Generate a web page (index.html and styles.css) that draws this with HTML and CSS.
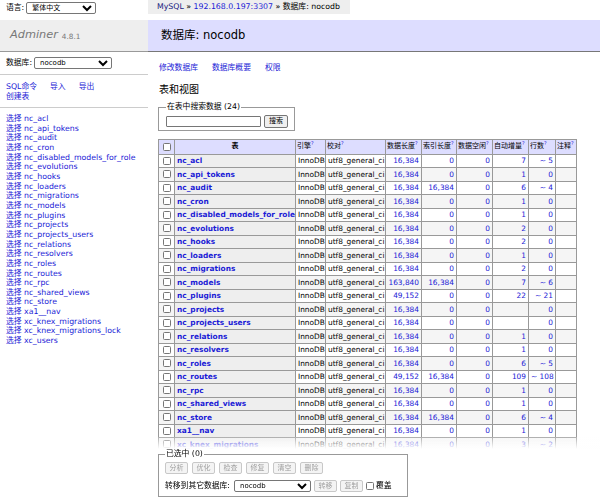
FILE: index.html
```html
<!DOCTYPE html>
<html lang="zh-CN">
<head>
<meta charset="utf-8">
<title>数据库: nocodb - Adminer</title>
<link rel="stylesheet" href="styles.css">
</head>
<body>
<div class="page">
  <aside class="menu">
    <div class="lang">语言: <select class="sel sel-lang"><option>繁体中文</option></select></div>
    <h1 class="logo"><a class="logo-name">Adminer</a><span class="version">4.8.1</span></h1>
    <p class="dbs">数据库: <select class="sel sel-db"><option>nocodb</option></select></p>
    <p class="menu-links"><a>SQL命令</a><a>导入</a><a>导出</a><br><a>创建表</a></p>
    <ul class="tables">
      <li><a>选择</a> <a>nc_acl</a></li>
      <li><a>选择</a> <a>nc_api_tokens</a></li>
      <li><a>选择</a> <a>nc_audit</a></li>
      <li><a>选择</a> <a>nc_cron</a></li>
      <li><a>选择</a> <a>nc_disabled_models_for_role</a></li>
      <li><a>选择</a> <a>nc_evolutions</a></li>
      <li><a>选择</a> <a>nc_hooks</a></li>
      <li><a>选择</a> <a>nc_loaders</a></li>
      <li><a>选择</a> <a>nc_migrations</a></li>
      <li><a>选择</a> <a>nc_models</a></li>
      <li><a>选择</a> <a>nc_plugins</a></li>
      <li><a>选择</a> <a>nc_projects</a></li>
      <li><a>选择</a> <a>nc_projects_users</a></li>
      <li><a>选择</a> <a>nc_relations</a></li>
      <li><a>选择</a> <a>nc_resolvers</a></li>
      <li><a>选择</a> <a>nc_roles</a></li>
      <li><a>选择</a> <a>nc_routes</a></li>
      <li><a>选择</a> <a>nc_rpc</a></li>
      <li><a>选择</a> <a>nc_shared_views</a></li>
      <li><a>选择</a> <a>nc_store</a></li>
      <li><a>选择</a> <a>xa1__nav</a></li>
      <li><a>选择</a> <a>xc_knex_migrations</a></li>
      <li><a>选择</a> <a>xc_knex_migrations_lock</a></li>
      <li><a>选择</a> <a>xc_users</a></li>
    </ul>
  </aside>
  <main class="content">
    <div class="breadcrumb"><a class="visited">MySQL</a> » <a>192.168.0.197:3307</a> » 数据库: nocodb</div>
    <h2 class="title">数据库: nocodb</h2>
    <div class="inner">
      <p class="links"><a>修改数据库</a><a>数据库概要</a><a>权限</a></p>
      <h3 class="subtitle">表和视图</h3>
      <fieldset class="search">
        <legend>在表中搜索数据 (24)</legend>
        <div class="search-row"><input type="search" class="search-input"><button class="btn">搜索</button></div>
      </fieldset>
      <table class="tbl">
        <colgroup>
          <col class="c-cb"><col class="c-name"><col class="c-eng"><col class="c-col"><col class="c-n1"><col class="c-n2"><col class="c-n3"><col class="c-n4"><col class="c-n5"><col class="c-cm">
        </colgroup>
        <thead>
          <tr>
            <td class="cbc"><input type="checkbox" class="cb"></td>
            <th>表</th>
            <td>引擎<sup><a>?</a></sup></td>
            <td>校对<sup><a>?</a></sup></td>
            <td>数据长度<sup><a>?</a></sup></td>
            <td>索引长度<sup><a>?</a></sup></td>
            <td>数据空闲<sup><a>?</a></sup></td>
            <td>自动增量<sup><a>?</a></sup></td>
            <td>行数<sup><a>?</a></sup></td>
            <td>注释<sup><a>?</a></sup></td>
          </tr>
        </thead>
        <tbody>
          <tr><td class="cbc"><input type="checkbox" class="cb"></td><th><a>nc_acl</a></th><td>InnoDB</td><td>utf8_general_ci</td><td class="n"><a>16,384</a></td><td class="n"><a>0</a></td><td class="n"><a>0</a></td><td class="n"><a>7</a></td><td class="n"><a>~ 5</a></td><td></td></tr>
          <tr><td class="cbc"><input type="checkbox" class="cb"></td><th><a>nc_api_tokens</a></th><td>InnoDB</td><td>utf8_general_ci</td><td class="n"><a>16,384</a></td><td class="n"><a>0</a></td><td class="n"><a>0</a></td><td class="n"><a>1</a></td><td class="n"><a>0</a></td><td></td></tr>
          <tr><td class="cbc"><input type="checkbox" class="cb"></td><th><a>nc_audit</a></th><td>InnoDB</td><td>utf8_general_ci</td><td class="n"><a>16,384</a></td><td class="n"><a>16,384</a></td><td class="n"><a>0</a></td><td class="n"><a>6</a></td><td class="n"><a>~ 4</a></td><td></td></tr>
          <tr><td class="cbc"><input type="checkbox" class="cb"></td><th><a>nc_cron</a></th><td>InnoDB</td><td>utf8_general_ci</td><td class="n"><a>16,384</a></td><td class="n"><a>0</a></td><td class="n"><a>0</a></td><td class="n"><a>1</a></td><td class="n"><a>0</a></td><td></td></tr>
          <tr><td class="cbc"><input type="checkbox" class="cb"></td><th><a>nc_disabled_models_for_role</a></th><td>InnoDB</td><td>utf8_general_ci</td><td class="n"><a>16,384</a></td><td class="n"><a>0</a></td><td class="n"><a>0</a></td><td class="n"><a>1</a></td><td class="n"><a>0</a></td><td></td></tr>
          <tr><td class="cbc"><input type="checkbox" class="cb"></td><th><a>nc_evolutions</a></th><td>InnoDB</td><td>utf8_general_ci</td><td class="n"><a>16,384</a></td><td class="n"><a>0</a></td><td class="n"><a>0</a></td><td class="n"><a>2</a></td><td class="n"><a>0</a></td><td></td></tr>
          <tr><td class="cbc"><input type="checkbox" class="cb"></td><th><a>nc_hooks</a></th><td>InnoDB</td><td>utf8_general_ci</td><td class="n"><a>16,384</a></td><td class="n"><a>0</a></td><td class="n"><a>0</a></td><td class="n"><a>2</a></td><td class="n"><a>0</a></td><td></td></tr>
          <tr><td class="cbc"><input type="checkbox" class="cb"></td><th><a>nc_loaders</a></th><td>InnoDB</td><td>utf8_general_ci</td><td class="n"><a>16,384</a></td><td class="n"><a>0</a></td><td class="n"><a>0</a></td><td class="n"><a>1</a></td><td class="n"><a>0</a></td><td></td></tr>
          <tr><td class="cbc"><input type="checkbox" class="cb"></td><th><a>nc_migrations</a></th><td>InnoDB</td><td>utf8_general_ci</td><td class="n"><a>16,384</a></td><td class="n"><a>0</a></td><td class="n"><a>0</a></td><td class="n"><a>2</a></td><td class="n"><a>0</a></td><td></td></tr>
          <tr><td class="cbc"><input type="checkbox" class="cb"></td><th><a>nc_models</a></th><td>InnoDB</td><td>utf8_general_ci</td><td class="n"><a>163,840</a></td><td class="n"><a>16,384</a></td><td class="n"><a>0</a></td><td class="n"><a>7</a></td><td class="n"><a>~ 6</a></td><td></td></tr>
          <tr><td class="cbc"><input type="checkbox" class="cb"></td><th><a>nc_plugins</a></th><td>InnoDB</td><td>utf8_general_ci</td><td class="n"><a>49,152</a></td><td class="n"><a>0</a></td><td class="n"><a>0</a></td><td class="n"><a>22</a></td><td class="n"><a>~ 21</a></td><td></td></tr>
          <tr><td class="cbc"><input type="checkbox" class="cb"></td><th><a>nc_projects</a></th><td>InnoDB</td><td>utf8_general_ci</td><td class="n"><a>16,384</a></td><td class="n"><a>0</a></td><td class="n"><a>0</a></td><td class="n"></td><td class="n"><a>0</a></td><td></td></tr>
          <tr><td class="cbc"><input type="checkbox" class="cb"></td><th><a>nc_projects_users</a></th><td>InnoDB</td><td>utf8_general_ci</td><td class="n"><a>16,384</a></td><td class="n"><a>0</a></td><td class="n"><a>0</a></td><td class="n"></td><td class="n"><a>0</a></td><td></td></tr>
          <tr><td class="cbc"><input type="checkbox" class="cb"></td><th><a>nc_relations</a></th><td>InnoDB</td><td>utf8_general_ci</td><td class="n"><a>16,384</a></td><td class="n"><a>0</a></td><td class="n"><a>0</a></td><td class="n"><a>1</a></td><td class="n"><a>0</a></td><td></td></tr>
          <tr><td class="cbc"><input type="checkbox" class="cb"></td><th><a>nc_resolvers</a></th><td>InnoDB</td><td>utf8_general_ci</td><td class="n"><a>16,384</a></td><td class="n"><a>0</a></td><td class="n"><a>0</a></td><td class="n"><a>1</a></td><td class="n"><a>0</a></td><td></td></tr>
          <tr><td class="cbc"><input type="checkbox" class="cb"></td><th><a>nc_roles</a></th><td>InnoDB</td><td>utf8_general_ci</td><td class="n"><a>16,384</a></td><td class="n"><a>0</a></td><td class="n"><a>0</a></td><td class="n"><a>6</a></td><td class="n"><a>~ 5</a></td><td></td></tr>
          <tr><td class="cbc"><input type="checkbox" class="cb"></td><th><a>nc_routes</a></th><td>InnoDB</td><td>utf8_general_ci</td><td class="n"><a>49,152</a></td><td class="n"><a>16,384</a></td><td class="n"><a>0</a></td><td class="n"><a>109</a></td><td class="n"><a>~ 108</a></td><td></td></tr>
          <tr><td class="cbc"><input type="checkbox" class="cb"></td><th><a>nc_rpc</a></th><td>InnoDB</td><td>utf8_general_ci</td><td class="n"><a>16,384</a></td><td class="n"><a>0</a></td><td class="n"><a>0</a></td><td class="n"><a>1</a></td><td class="n"><a>0</a></td><td></td></tr>
          <tr><td class="cbc"><input type="checkbox" class="cb"></td><th><a>nc_shared_views</a></th><td>InnoDB</td><td>utf8_general_ci</td><td class="n"><a>16,384</a></td><td class="n"><a>0</a></td><td class="n"><a>0</a></td><td class="n"><a>1</a></td><td class="n"><a>0</a></td><td></td></tr>
          <tr><td class="cbc"><input type="checkbox" class="cb"></td><th><a>nc_store</a></th><td>InnoDB</td><td>utf8_general_ci</td><td class="n"><a>16,384</a></td><td class="n"><a>16,384</a></td><td class="n"><a>0</a></td><td class="n"><a>6</a></td><td class="n"><a>~ 4</a></td><td></td></tr>
          <tr><td class="cbc"><input type="checkbox" class="cb"></td><th><a>xa1__nav</a></th><td>InnoDB</td><td>utf8_general_ci</td><td class="n"><a>16,384</a></td><td class="n"><a>0</a></td><td class="n"><a>0</a></td><td class="n"><a>1</a></td><td class="n"><a>0</a></td><td></td></tr>
          <tr><td class="cbc"><input type="checkbox" class="cb"></td><th><a>xc_knex_migrations</a></th><td>InnoDB</td><td>utf8_general_ci</td><td class="n"><a>16,384</a></td><td class="n"><a>0</a></td><td class="n"><a>0</a></td><td class="n"><a>3</a></td><td class="n"><a>~ 2</a></td><td></td></tr>
          <tr><td class="cbc"><input type="checkbox" class="cb"></td><th><a>xc_knex_migrations_lock</a></th><td>InnoDB</td><td>utf8_general_ci</td><td class="n"><a>16,384</a></td><td class="n"><a>0</a></td><td class="n"><a>0</a></td><td class="n"><a>2</a></td><td class="n"><a>0</a></td><td></td></tr>
          <tr><td class="cbc"><input type="checkbox" class="cb"></td><th><a>xc_users</a></th><td>InnoDB</td><td>utf8_general_ci</td><td class="n"><a>16,384</a></td><td class="n"><a>0</a></td><td class="n"><a>0</a></td><td class="n"><a>1</a></td><td class="n"><a>0</a></td><td></td></tr>
        </tbody>
      </table>
      <div class="footer">
        <div class="footer-inner">
          <fieldset class="sel-fs">
            <legend>已选中 (0)</legend>
            <div class="fs-row">
              <button class="btn" disabled>分析</button>
              <button class="btn" disabled>优化</button>
              <button class="btn" disabled>检查</button>
              <button class="btn" disabled>修复</button>
              <button class="btn" disabled>清空</button>
              <button class="btn" disabled>删除</button>
            </div>
            <div class="fs-row fs-row2">
              <span class="fs-label">转移到其它数据库:</span>
              <select class="sel sel-target"><option>nocodb</option></select>
              <button class="btn" disabled>转移</button>
              <button class="btn" disabled>复制</button>
              <label class="ow"><input type="checkbox" class="cb">覆盖</label>
            </div>
          </fieldset>
        </div>
      </div>
    </div>
  </main>
</div>
</body>
</html>
```
FILE: styles.css
```css
* { box-sizing: border-box; }
html, body { margin: 0; padding: 0; background: #fff; }
body {
  font-family: "DejaVu Sans", "Noto Sans CJK SC", sans-serif;
  font-size: 7.8px;
  line-height: 1.25;
  color: #000;
}
a { color: #1a1ad6; text-decoration: none; }
a.visited { color: #1a1a80; }

.page {
  display: flex;
  align-items: flex-start;
  height: 500px;
  overflow: hidden;
}

/* ---------- sidebar ---------- */
.menu { width: 148px; flex: none; }
.lang {
  display: flex;
  align-items: center;
  gap: 2px;
  height: 16px;
  padding: 0 6px;
  margin-bottom: 4px;
}
.sel {
  font-family: inherit;
  font-size: 7px;
  height: 12px;
  padding: 0 1px;
  border: 1px solid #767676;
  border-radius: 2px;
  background: #fff;
  color: #000;
  margin: 0;
}
.sel-lang { width: 70px; }
.logo {
  margin: 0;
  height: 32px;
  padding-left: 10px;
  display: flex;
  align-items: center;
  gap: 4px;
  background: #eee;
  border-bottom: 1px solid #999;
  font-weight: normal;
}
.logo-name { font-size: 11.3px; font-style: italic; color: #777; }
.version { font-size: 7.3px; color: #777; margin-top: 2px; }
.dbs {
  margin: 0;
  height: 23px;
  display: flex;
  align-items: center;
  gap: 2px;
  padding-left: 6px;
  border-bottom: 1px solid #ccc;
}
.sel-db { width: 78px; }
.menu-links {
  margin: 0;
  padding: 7px 6px 5px;
  line-height: 10px;
  border-bottom: 1px solid #ccc;
}
.menu-links a { margin-right: 13px; white-space: nowrap; }
.tables {
  list-style: none;
  margin: 0;
  padding: 6px 6px;
  line-height: 9.65px;
  white-space: nowrap;
}

/* ---------- content ---------- */
.content { flex: 1; min-width: 0; }
.breadcrumb {
  display: inline-block;
  background: #eee;
  height: 14px;
  line-height: 14px;
  padding: 0 10px 0 9px;
  white-space: nowrap;
}
.title {
  margin: 6px 0 0;
  height: 32px;
  padding-left: 13px;
  display: flex;
  align-items: center;
  background: #ddf;
  border-bottom: 1px solid #777;
  font-size: 11.5px;
  font-weight: normal;
}
.inner { padding-left: 10px; }
.links { margin: 11px 0 0; line-height: 10px; padding-left: 1px; }
.links a { margin-right: 14px; }
.subtitle {
  margin: 11px 0 0;
  font-size: 10px;
  line-height: 12px;
  font-weight: normal;
  padding-left: 1px;
}

fieldset { border: 1px solid #999; }
legend { padding: 0 1px; line-height: 10px; }
.search {
  display: inline-block;
  margin: 6px 0 0;
  padding: 3px 6px 2px 7px;
}
.search-row { display: flex; align-items: center; gap: 3px; }
.search-input {
  width: 95px;
  height: 11px;
  border: 1px solid #767676;
  border-radius: 1px;
  padding: 0;
  margin: 0;
  background: #fff;
}
.btn {
  font-family: inherit;
  font-size: 7px;
  height: 13px;
  line-height: 11px;
  padding: 0 4px;
  margin: 0;
  border: 1px solid #767676;
  border-radius: 2px;
  background: #efefef;
  color: #000;
  white-space: nowrap;
  flex: none;
}
.btn:disabled {
  color: #a0a0a0;
  border-color: #c8c8c8;
  background: #f4f4f4;
}

/* ---------- table ---------- */
.tbl {
  margin-top: 8px;
  border-collapse: collapse;
  table-layout: fixed;
  width: 418px;
  font-size: 7.4px;
}
.c-cb { width: 16px; }
.c-name { width: 121px; }
.c-eng { width: 30px; }
.c-col { width: 60px; }
.c-n1 { width: 36px; }
.c-n2 { width: 35px; }
.c-n3 { width: 36px; }
.c-n4 { width: 36px; }
.c-n5 { width: 27px; }
.c-cm { width: 21px; }
.tbl td, .tbl th {
  border: 1px solid #999;
  padding: 1.5px 2px;
  line-height: 9.5px;
  white-space: nowrap;
  text-align: left;
}
.tbl thead td, .tbl thead th {
  background: #ddf;
  padding: 2px 1px;
  font-size: 7px;
}
.tbl thead th { text-align: center; }
.tbl tbody th { background: #eee; }
.tbl tbody tr:nth-child(2n) td { background: #f5f5f5; }
.tbl td.n { text-align: right; }
.tbl td.cbc { padding: 0; text-align: center; }
.tbl sup { font-size: 5px; line-height: 0; vertical-align: 3px; }

.cb {
  appearance: none;
  -webkit-appearance: none;
  width: 8px;
  height: 8px;
  margin: 0;
  border: 1px solid #767676;
  border-radius: 1.5px;
  background: #fff;
  vertical-align: middle;
  flex: none;
}
.tbl .cb { display: block; margin: 0 auto; }

/* ---------- sticky footer ---------- */
.footer {
  position: sticky;
  bottom: 0;
  border-top: 12px solid rgba(255, 255, 255, .7);
  border-image: linear-gradient(rgba(255, 255, 255, .2), #fff) 100% 0;
}
.footer-inner { background: #fff; padding-bottom: 3px; }
.sel-fs {
  margin: 0;
  width: max-content;
  min-width: 250px;
  padding: 3px 8px 4px 6px;
}
.fs-row { display: flex; align-items: center; gap: 4px; height: 12px; white-space: nowrap; }
.fs-row .btn { height: 12px; line-height: 10px; padding: 0 3.5px; }
.fs-row2 { margin-top: 6px; gap: 3px; }
.fs-label { flex: none; margin-right: 1px; }
.sel-target { width: 77px; flex: none; }
.ow { display: flex; align-items: center; gap: 2px; flex: none; }
```
